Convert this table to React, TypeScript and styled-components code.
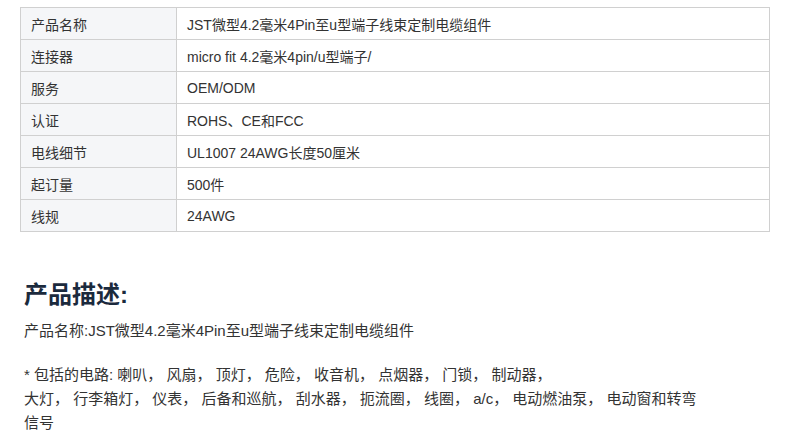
import React from "react";
import styled, { createGlobalStyle } from "styled-components";

const Global = createGlobalStyle`
  html, body { margin: 0; padding: 0; background: #fff; }
  body { font-family: "Liberation Sans", Arial, "Noto Sans CJK SC", sans-serif; color: #333; }
`;

const Page = styled.div`
  padding: 7px 20px 0 20px;
  width: 750px;
`;

const Table = styled.table`
  width: 750px;
  border-collapse: collapse;
  font-size: 14px;
`;

const Row = styled.tr`
  height: 32px;
`;

const Label = styled.td`
  width: 135px;
  padding: 0 10px;
  background: #f5f6f8;
  border: 1px solid #d0d0d0;
  color: #333;
`;

const Value = styled.td`
  padding: 0 10px;
  border: 1px solid #d0d0d0;
  color: #333;
`;

const Description = styled.section`
  margin-top: 48px;
  padding-left: 4px;
  width: 680px;
`;

const Heading = styled.h2`
  margin: 0 0 9px 0;
  font-size: 24px;
  line-height: 30px;
  font-weight: 700;
  color: #1b2a3d;
`;

const Para = styled.p`
  margin: 0 0 20px 0;
  font-size: 15px;
  line-height: 24px;
  color: #333;
`;

const rows: [string, string][] = [
  ["产品名称", "JST微型4.2毫米4Pin至u型端子线束定制电缆组件"],
  ["连接器", "micro fit 4.2毫米4pin/u型端子/"],
  ["服务", "OEM/ODM"],
  ["认证", "ROHS、CE和FCC"],
  ["电线细节", "UL1007 24AWG长度50厘米"],
  ["起订量", "500件"],
  ["线规", "24AWG"],
];

export default function App() {
  return (
    <>
      <Global />
      <Page>
        <Table>
          <tbody>
            {rows.map(([k, v]) => (
              <Row key={k}>
                <Label>{k}</Label>
                <Value>{v}</Value>
              </Row>
            ))}
          </tbody>
        </Table>
        <Description>
          <Heading>产品描述:</Heading>
          <Para>产品名称:JST微型4.2毫米4Pin至u型端子线束定制电缆组件</Para>
          <Para>
            * 包括的电路: 喇叭， 风扇， 顶灯， 危险， 收音机， 点烟器， 门锁， 制动器，
            <br />
            大灯， 行李箱灯， 仪表， 后备和巡航， 刮水器， 扼流圈， 线圈， a/c， 电动燃油泵， 电动窗和转弯信号
          </Para>
        </Description>
      </Page>
    </>
  );
}
